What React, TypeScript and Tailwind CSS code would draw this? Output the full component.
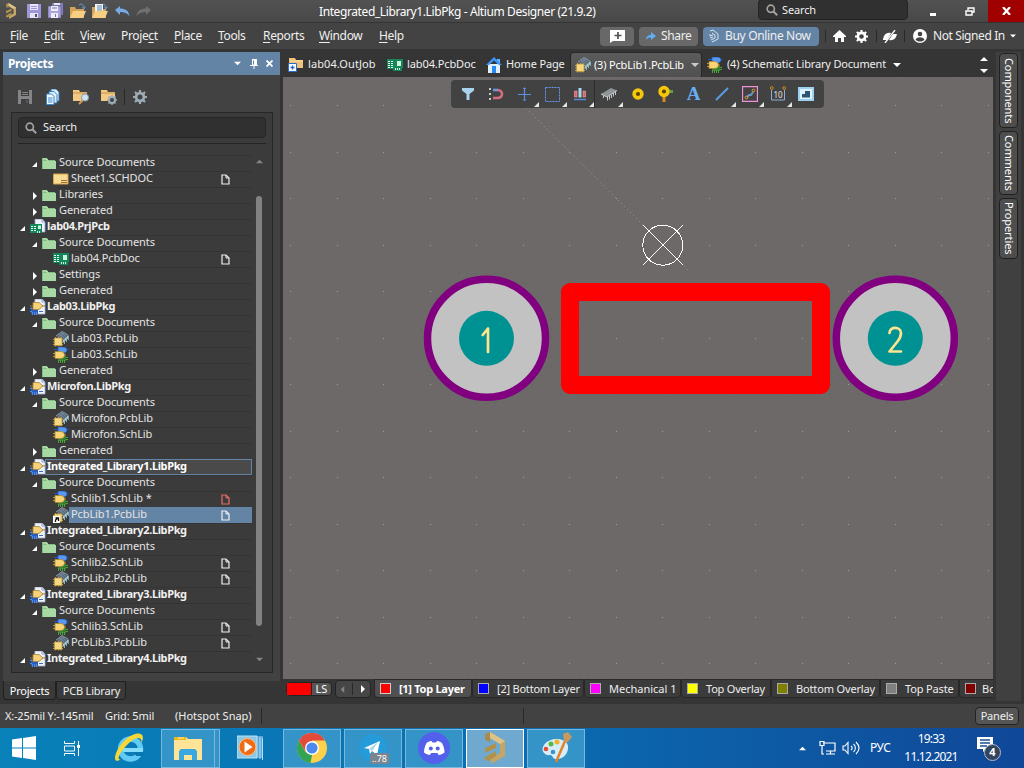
import React from "react";

type P = { className?: string };

const Svg = ({ w = 16, h = 16, className = "", children }: { w?: number; h?: number; className?: string; children: React.ReactNode }) => (
  <svg width={w} height={h} viewBox={`0 0 ${w} ${h}`} className={"shrink-0 " + className} fill="none">
    {children}
  </svg>
);

/* ---------- icons ---------- */
const AltiumLogo = ({ size = 16 }: { size?: number }) => (
  <svg width={size} height={size} viewBox="0 0 32 32" className="shrink-0">
    <path d="M6 2l5-2v10l-5-2z" fill="#a88a4c" />
    <path d="M11 0l15 9v15l-14 8v-6l9-5v-9L11 6z" fill="#c3a565" />
    <path d="M11 0l15 9-5 3-10-6z" fill="#dcc489" />
    <path d="M6 16l11-5v5L6 21zM6 25l11-6v5L9 29l-3-1z" fill="#b0924f" />
  </svg>
);
const Floppy = ({ c = "#9d96d8", hi = "#e6e4f5" }: { c?: string; hi?: string }) => (
  <Svg>
    <path d="M1 1h14v14H1z" fill={c} />
    <path d="M4 1h8v6H4z" fill={hi} />
    <path d="M5 3.500h6M5 5.500h6" stroke={c} />
    <path d="M4 10h8v5H4z" fill={hi} />
    <path d="M9 11h2v3H9z" fill="#555370" />
  </Svg>
);
const FloppyAll = () => (
  <Svg>
    <path d="M4 0h11v12H4z" fill="#8580bd" />
    <path d="M6 0h6v2H6z" fill="#e6e4f5" />
    <path d="M0 3h13v12H0z" fill="#a9a3de" stroke="#55527f" strokeWidth=".6" />
    <path d="M3 3h7v5H3zM3 10h7v5H3z" fill="#eeecf8" />
    <path d="M4 5h5M7.500 11v3" stroke="#77729f" />
  </Svg>
);
const OpenFolder = ({ doc = false }: { doc?: boolean }) => (
  <Svg>
    <path d="M9 2c3-2 5 0 5 3M12 4l2 2 1.500-2.500" stroke="#5a86a8" strokeWidth="1.200" />
    <path d="M0 4h5l1 2h8v9H0z" fill="#d3a35a" />
    {doc && <path d="M3 1h8v9H3z" fill="#f4f4f4" />}
    {doc && <path d="M5 3h5M5 5h5M5 7h5" stroke="#5b87b5" />}
    <path d="M3 8h13l-3 7H0z" fill="#f7cf82" />
  </Svg>
);
const Arrow = ({ flip = false }: { flip?: boolean }) => (
  <Svg w={15} h={12}>
    <g transform={flip ? "translate(15 0) scale(-1 1)" : undefined}>
      <path d="M0 5l5-4v2.500c5 0 9 2 9.500 8C12.500 8 9 7 5 7v3z" fill={flip ? "#707070" : "#77aae6"} />
    </g>
  </Svg>
);
const Magnifier = () => (
  <Svg w={12} h={12}>
    <circle cx="4.800" cy="4.800" r="3.600" stroke="#a2a2a2" strokeWidth="1.700" />
    <path d="M7.500 7.500l3.700 3.700" stroke="#a2a2a2" strokeWidth="2" />
  </Svg>
);
const Gear = ({ c = "#fff", size = 14 }: { c?: string; size?: number }) => (
  <svg width={size} height={size} viewBox="0 0 14 14" className="shrink-0">
    <circle cx="7" cy="7" r="3.900" fill="none" stroke={c} strokeWidth="2.800" />
    <g stroke={c} strokeWidth="2.200">
      <path d="M7 0v3M7 11v3M0 7h3M11 7h3M2 2l2 2M10 10l2 2M12 2l-2 2M4 10l-2 2" />
    </g>
  </svg>
);
const Copies = () => (
  <Svg>
    <path d="M6 0h5l3 3v9H6z" fill="#dbeefc" stroke="#2f77b5" strokeWidth=".9" />
    <path d="M4 2.500h5l3 3V14H4z" fill="#dbeefc" stroke="#2f77b5" strokeWidth=".9" />
    <path d="M1.500 5h5l2.500 2.500v8H1.500z" fill="#f0f8ff" stroke="#3d87c6" />
    <path d="M3 9h4.500M3 11h4.500M3 13h4.500" stroke="#3d87c6" />
  </Svg>
);
const FolderPlus = ({ kind }: { kind: "lens" | "gear" }) => (
  <Svg>
    <path d="M0 1h6l1 2h7v9H0z" fill="#f4c983" />
    <path d="M0 4h14" stroke="#c4924d" />
    {kind === "lens" ? (
      <>
        <path d="M9.500 11.500L6 15" stroke="#d8984a" strokeWidth="2" />
        <circle cx="12" cy="8.500" r="3.600" fill="#cfe0ee" stroke="#8198aa" />
      </>
    ) : (
      <>
        <circle cx="11" cy="11" r="3" fill="#424242" stroke="#9cadb8" strokeWidth="2" />
        <path d="M11 6v2M11 14v2M6 11h2M14 11h2M7.500 7.500L9 9M13 13l1.500 1.500M14.500 7.500L13 9M9 13l-1.500 1.500" stroke="#9cadb8" strokeWidth="1.300" />
      </>
    )}
  </Svg>
);
const Folder = () => (
  <Svg w={14} h={12}>
    <path d="M0 1h5l1 2h7v9H0z" fill="#7fbf80" />
    <path d="M1 4h13v8H1z" fill="#a6d9a3" />
    <path d="M1 2h4l1 2" stroke="#c7eac3" />
  </Svg>
);
const PcbDoc = () => (
  <Svg w={16} h={12}>
    <path d="M0 0h16v9h-1v3H6v-2H0z" fill="#15855a" />
    <path d="M1 2.500h2M1 4.500h2M1 6.500h2M1 8.500h2M4 2.500h2M4 4.500h2M4 6.500h2M4 8.500h2" stroke="#e2fff0" />
    <path d="M10 2h4v5h-4z" fill="#c9f5df" />
    <path d="M8.500 9v2M10.500 9v2M12.500 9v2" stroke="#c9f5df" />
  </Svg>
);
const PrjPcb = () => (
  <Svg>
    <path d="M5 0h7l3 3v10H5z" fill="#f0f1fa" stroke="#99a2cd" strokeWidth=".8" />
    <path d="M12 0v3h3" stroke="#99a2cd" />
    <path d="M0 5h12v9H0z" fill="#15855a" />
    <path d="M1 7.500h2M1 9.500h2M1 11.500h2M4 7.500h2M4 9.500h2M4 11.500h2" stroke="#e2fff0" />
    <path d="M8 6.500h3v3.500H8z" fill="#c9f5df" />
    <path d="M7.500 12v2M9.500 12v2" stroke="#c9f5df" />
  </Svg>
);
const LibPkg = () => (
  <Svg>
    <path d="M5 0h7l3 3v12H4z" fill="#eef0fa" stroke="#a6b0d0" strokeWidth=".8" />
    <path d="M12 0v3h3" stroke="#8fa0c0" />
    <path d="M1 8h7v7H1z" fill="#285dbe" />
    <path d="M0 9.500h2M0 12.500h2M2.500 13v3M4.500 13v3M6.500 13v3" stroke="#4f8ce8" />
    <path d="M0 7h15" stroke="#a17a25" />
    <path d="M3 3.500h6l4 3.500-4 3.500H3z" fill="#f5d279" stroke="#a8822e" strokeWidth=".8" />
    <path d="M9 12.500h4" stroke="#3e6fb8" />
  </Svg>
);
const PcbLib = ({ link = false }: { link?: boolean }) => (
  <Svg>
    <path d="M3 5l6-4.500L15 4l-5 5z" fill="#58697b" />
    <path d="M3 5l6-4.500L15 4" stroke="#93a6b6" strokeWidth=".8" />
    <path d="M6 3l5.500 4M8 2l5 3.500M5.500 6l6-4.500" stroke="#7f92a4" strokeWidth=".7" />
    <path d="M10 9l5.500-5v3L10 12z" fill="#a9cdd4" />
    <path d="M11.500 8v5M13.500 6v5M15.300 5v4" stroke="#8fb4bd" strokeWidth="1" />
    <path d="M0 8.500h10M0 11h10M0 13.500h10M2.500 6v9.500M5.500 6v9.500M8 6v9.500" stroke="#c2a24d" strokeWidth=".9" />
    <path d="M1.500 7h7.500v7.500H1.500z" fill="#f4d780" stroke="#b8963f" strokeWidth=".7" />
    {link && (
      <>
        <path d="M0 9h7v7H0z" fill="#fff" />
        <path d="M2.500 15v-2l2-1.500M2.500 11h3v3" stroke="#111" strokeWidth="1.300" />
      </>
    )}
  </Svg>
);
const SchLib = () => (
  <Svg>
    <path d="M1 2.500h14" stroke="#205bbb" />
    <path d="M5 0h5c3 0 4 1.500 4 3s-1 3-4 3H5z" fill="#5a98ef" stroke="#205bbb" strokeWidth=".8" />
    <path d="M5 9h8v5H5z" fill="#328232" />
    <path d="M5.500 13v3M7.500 13v3M9.500 13v3M11.500 13v3M13 10.500h2M13 12.500h2" stroke="#4fae3d" strokeWidth=".9" />
    <path d="M0 6.500h3M0 9.500h3M8 8h5" stroke="#c0962e" />
    <path d="M2 4.500h5.500c2.500 0 4 1.500 4 3.500s-1.500 3.500-4 3.500H2z" fill="#f7d476" stroke="#ad852e" strokeWidth=".8" />
  </Svg>
);
const SchDoc = () => (
  <Svg w={16} h={12}>
    <path d="M.5 1h14.500v10H.5z" fill="#f8dc95" stroke="#d3a04b" />
    <path d="M8 7.500h6M8 9.500h6" stroke="#9c7131" />
  </Svg>
);
const OutJob = () => (
  <Svg>
    <path d="M1 1h6l1 2h7v8H1z" fill="#efc27c" />
    <path d="M2 4h13" stroke="#fae1ab" />
    <path d="M.5 6.500h8v8h-8z" fill="#fff" stroke="#2d6cc9" />
    <path d="M2.500 10.500h4M4.500 8.500v4" stroke="#1c68d4" strokeWidth="1.300" />
  </Svg>
);
const HomeIcon = () => (
  <Svg>
    <path d="M11 2h3v5h-3z" fill="#6cb2ff" />
    <path d="M2 7h12v9H2z" fill="#e1effc" />
    <path d="M0 8l8-8 8 8H13L8 3.500 3 8z" fill="#3a94fb" />
    <path d="M6 9h4v7H6z" fill="#268af5" />
  </Svg>
);
const DocIcon = ({ red = false }: { red?: boolean }) => (
  <Svg w={9} h={11}>
    <path d="M1 1h4l3 3v6H1z" stroke={red ? "#ee6b6b" : "#f0f0f0"} strokeWidth="1.200" />
    <path d="M5 1v3h3" stroke={red ? "#ee6b6b" : "#f0f0f0"} />
  </Svg>
);
const Tri = ({ dir, c = "#fff", s = 8 }: { dir: "up" | "down" | "left" | "right"; c?: string; s?: number }) => (
  <svg width={s} height={s} viewBox="0 0 8 8" className="shrink-0">
    <path d={{ up: "M0 6l4-4 4 4z", down: "M0 2l4 4 4-4z", left: "M6 0L2 4l4 4z", right: "M2 0l4 4-4 4z" }[dir]} fill={c} />
  </svg>
);

/* ---------- title and menu ---------- */
const TitleBar = () => (
  <div className="flex h-[23px] shrink-0 border-b border-[#343434] bg-linear-to-b from-[#525252] to-[#484848]">
    <div className="flex w-[319px] items-center pl-[3px]">
      <div className="flex w-[23px] items-center"><AltiumLogo /></div>
      <div className="w-[22px]"><Floppy /></div>
      <div className="w-[22px]"><FloppyAll /></div>
      <div className="w-[22px]"><OpenFolder /></div>
      <div className="w-[23px]"><OpenFolder doc /></div>
      <div className="w-[21px]"><Arrow /></div>
      <Arrow flip />
    </div>
    <div className="w-[439px] text-[12px] leading-[23px] tracking-[-0.4px] text-white">Integrated_Library1.LibPkg - Altium Designer (21.9.2)</div>
    <div className="-mt-px flex h-[21px] w-[150px] items-center gap-[4px] rounded border border-[#242424] bg-[#303030] pl-[7px] text-[11px]">
      <Magnifier />
      <span className="leading-[17px] tracking-[-0.15px]">Search</span>
    </div>
    <div className="flex w-[80px] items-center pl-[22px]">
      <div className="mt-1.5 h-[3px] w-[6px] bg-white" />
      <Svg w={10} h={9} className="ml-[29px]">
        <path d="M3 3V1h6v4H7M1 4h6v4H1z" stroke="#fff" strokeWidth="1.400" />
      </Svg>
    </div>
    <div className="flex w-9 items-center justify-center bg-[#a00000]">
      <Svg w={9} h={8}><path d="M1 0l7 8M8 0L1 8" stroke="#fff" strokeWidth="2.200" /></Svg>
    </div>
  </div>
);

const menus: [string, string, string, string][] = [
  ["", "F", "ile", "w-[34px]"],
  ["", "E", "dit", "w-[36px]"],
  ["", "V", "iew", "w-[41px]"],
  ["Proje", "c", "t", "w-[53px]"],
  ["", "P", "lace", "w-[44px]"],
  ["", "T", "ools", "w-[45px]"],
  ["", "R", "eports", "w-[56px]"],
  ["", "W", "indow", "w-[60px]"],
  ["", "H", "elp", "w-[60px]"],
];
const Divider = ({ className = "" }: P) => <div className={"w-px bg-[#282828] " + className} />;

const MenuBar = () => (
  <div className="flex h-[26px] shrink-0 items-center bg-[#434343] pl-[10px] text-[12px] tracking-[-0.35px]">
    {menus.map(([a, u, b, w]) => (
      <div key={u + b} className={w}>
        {a}<span className="underline underline-offset-2">{u}</span>{b}
      </div>
    ))}
    <div className="ml-[161px] flex h-[19px] w-[34px] items-center justify-center rounded-sm bg-[#686868]">
      <Svg w={16} h={14}>
        <path d="M1 1h15v11H4l-3 2z" fill="#fff" />
        <path d="M9 3v7M5.500 6.500h7" stroke="#505050" strokeWidth="1.700" />
      </Svg>
    </div>
    <div className="ml-[5px] flex h-[19px] w-[59px] items-center gap-[5px] rounded-sm bg-[#686868] pl-[7px]">
      <Svg w={10} h={9}><path d="M0 8c0-4 3-5 5-5V0l5 4-5 4V5.500C3 5.500 1 6 0 8z" fill="#62aef5" /></Svg>Share
    </div>
    <div className="ml-[5px] flex h-[19px] w-[116px] items-center gap-[6px] rounded-sm bg-[#6484a5] pl-[6px]">
      <Svg w={10} h={14}>
        <path d="M1 2l3-1 5 4v5l-6 3M3 4l3 2v3l-4 2M1 5v2l3-1M1 9l3-1" stroke="#d8e4f2" />
      </Svg>
      <span className="tracking-[-0.33px]">Buy Online Now</span>
    </div>
    <Divider className="ml-[6px] h-3" />
    <Svg w={13} h={12} className="ml-[7px]"><path d="M0 6l6.500-6L13 6v1h-2v5H8V8H5v4H2V7H0z" fill="#fff" /></Svg>
    <div className="ml-[9px]"><Gear size={13} /></div>
    <Divider className="ml-[8px] h-3" />
    <Svg w={14} h={13} className="ml-[6px]">
      <path d="M0 9c1-5 4-7 8-6L4 10H0zM14 4c-1 5-4 7-8 6l4-6z" fill="#fff" />
      <path d="M12 0L2 13" stroke="#fff" strokeWidth="1.300" />
    </Svg>
    <Divider className="ml-[7px] h-3" />
    <Svg w={14} h={14} className="ml-[8px]">
      <circle cx="7" cy="7" r="7" fill="#fff" />
      <circle cx="7" cy="5" r="2.300" fill="#434343" />
      <path d="M2.500 10.500c2-3 7-3 9 0-2 2.700-7 2.700-9 0z" fill="#434343" />
    </Svg>
    <span className="ml-[6px] w-[77px] tracking-[-0.4px] whitespace-nowrap">Not Signed In</span>
    <Tri dir="down" s={6} />
  </div>
);

/* ---------- project tree ---------- */
type Row = { k: "src" | "fold" | "prj" | "lib" | "schdoc" | "pcbdoc" | "pcb" | "sch"; t: string; d?: "w" | "r"; sel?: boolean; focus?: boolean };
const rows: Row[] = [
  { k: "src", t: "Source Documents" },
  { k: "schdoc", t: "Sheet1.SCHDOC", d: "w" },
  { k: "fold", t: "Libraries" },
  { k: "fold", t: "Generated" },
  { k: "prj", t: "lab04.PrjPcb" },
  { k: "src", t: "Source Documents" },
  { k: "pcbdoc", t: "lab04.PcbDoc", d: "w" },
  { k: "fold", t: "Settings" },
  { k: "fold", t: "Generated" },
  { k: "lib", t: "Lab03.LibPkg" },
  { k: "src", t: "Source Documents" },
  { k: "pcb", t: "Lab03.PcbLib" },
  { k: "sch", t: "Lab03.SchLib" },
  { k: "fold", t: "Generated" },
  { k: "lib", t: "Microfon.LibPkg" },
  { k: "src", t: "Source Documents" },
  { k: "pcb", t: "Microfon.PcbLib" },
  { k: "sch", t: "Microfon.SchLib" },
  { k: "fold", t: "Generated" },
  { k: "lib", t: "Integrated_Library1.LibPkg", focus: true },
  { k: "src", t: "Source Documents" },
  { k: "sch", t: "Schlib1.SchLib *", d: "r" },
  { k: "pcb", t: "PcbLib1.PcbLib", d: "w", sel: true },
  { k: "lib", t: "Integrated_Library2.LibPkg" },
  { k: "src", t: "Source Documents" },
  { k: "sch", t: "Schlib2.SchLib", d: "w" },
  { k: "pcb", t: "PcbLib2.PcbLib", d: "w" },
  { k: "lib", t: "Integrated_Library3.LibPkg" },
  { k: "src", t: "Source Documents" },
  { k: "sch", t: "Schlib3.SchLib", d: "w" },
  { k: "pcb", t: "PcbLib3.PcbLib", d: "w" },
  { k: "lib", t: "Integrated_Library4.LibPkg" },
];

const Open = () => <Svg w={5} h={5}><path d="M5 0v5H0z" fill="#fff" /></Svg>;
const Closed = () => <Svg w={4} h={8}><path d="M0 0l4 4-4 4z" fill="#fff" /></Svg>;

const TreeRow = ({ r }: { r: Row }) => {
  const top = r.k === "prj" || r.k === "lib";
  const mid = r.k === "src" || r.k === "fold";
  const icon = {
    src: <Folder />, fold: <Folder />, prj: <PrjPcb />, lib: <LibPkg />, schdoc: <SchDoc />, pcbdoc: <PcbDoc />,
    pcb: <PcbLib link={r.sel} />, sch: <SchLib />,
  }[r.k];
  return (
    <div className={"flex h-4 w-[240px] " + (top ? "pl-2" : mid ? "pl-5" : "pl-[41px]")}>
      {(top || mid) && (
        <div className={"flex w-[10px] items-center pt-[2px] " + (r.k === "fold" ? "pl-px" : "")}>{r.k === "fold" ? <Closed /> : <Open />}</div>
      )}
      <div className={"-mt-px flex shrink-0 items-center " + (mid ? "w-[15px]" : "w-[16px]")}>{icon}</div>
      <div
        className={
          "flex flex-1 items-center justify-between whitespace-nowrap leading-[14px] " +
          (top ? "pl-px font-bold tracking-[-0.36px] text-[#f0f0f0] " : "pl-[2px] tracking-[-0.1px] text-[#e4e4e4] ") +
          (r.sel ? "bg-[#6484a5] pt-px" : r.focus ? "-ml-px border border-[#6484a5] bg-[#4a4a4a] text-white" : "border-t border-[#343434]")
        }
      >
        <span className={r.focus ? "-mt-[3px]" : "-mt-[4px]"}>{r.t}</span>
        {r.d && <span className="mr-[22px] -mt-px"><DocIcon red={r.d === "r"} /></span>}
      </div>
    </div>
  );
};

const ProjectsPanel = () => (
  <div className="flex w-[283px] shrink-0 flex-col pl-[3px]">
    <div className="flex h-[629px] w-[277px] shrink-0 flex-col bg-[#424242]">
      <div className="flex h-[23px] shrink-0 items-center bg-[#6484a5] pl-[5px] text-[12px] font-bold tracking-[-0.4px] text-white">
        <span className="w-[226px]">Projects</span>
        <Tri dir="down" s={7} />
        <Svg w={8} h={10} className="ml-[9px]"><path d="M2 0h5v6h1v1H0V6h2zM3.500 7h1v3h-1z" fill="#fff" /><path d="M3.500 1.500v4" stroke="#6484a5" /></Svg>
        <Svg w={7} h={7} className="ml-[8px]"><path d="M.5.5l6 6M6.500.5l-6 6" stroke="#fff" strokeWidth="1.800" /></Svg>
      </div>
      <div className="flex h-[37px] shrink-0 items-center pt-[7px] pl-[14px]">
        <div className="w-[28px]"><Floppy c="#858585" hi="#3f3f3f" /></div>
        <div className="w-[28px]"><Copies /></div>
        <div className="w-[28px]"><FolderPlus kind="lens" /></div>
        <div className="w-[23px]"><FolderPlus kind="gear" /></div>
        <Divider className="mr-[8px] h-4" />
        <Gear c="#9dabb5" />
      </div>
      <div className="ml-2 flex h-[561px] w-[262px] flex-col border border-[#262626] bg-[#3b3b3b]">
        <div className="mx-[6px] mt-1 flex h-[21px] w-[248px] shrink-0 items-center gap-[6px] rounded border border-[#252525] bg-[#303030] pl-[6px]">
          <Magnifier />
          <span className="-mt-px leading-4 tracking-[-0.15px]">Search</span>
        </div>
        <div className="mx-[6px] mt-[5px] h-px shrink-0 bg-[#242424]" />
        <div className="mt-[11px] flex">
          <div>{rows.map((r, i) => <TreeRow key={i} r={r} />)}</div>
          <div className="ml-[3px] flex h-[508px] w-2 flex-col items-center justify-between pt-[3px]">
            <Tri dir="up" c="#858585" s={7} />
            <div className="mt-[31px] mb-[30px] w-[6px] flex-1 rounded-full bg-[#828282]" />
            <Tri dir="down" c="#858585" s={7} />
          </div>
        </div>
      </div>
    </div>
    <div className="flex h-[19px] tracking-[-0.2px]">
      <div className="flex w-[53px] items-center justify-center rounded-b border border-t-0 border-[#202020] bg-[#3a3a3a] pt-[2px] text-white">Projects</div>
      <div className="flex w-[70px] items-center justify-center rounded-b border border-[#202020] bg-[#3a3a3a] pt-[2px] pl-px">PCB Library</div>
    </div>
  </div>
);

/* ---------- editor ---------- */
const DocTabs = () => (
  <div className="flex h-[25px] shrink-0 items-center whitespace-nowrap">
    <div className="flex w-[99px] items-center gap-[4px] pl-[5px] tracking-[0.1px]"><OutJob />lab04.OutJob</div>
    <div className="flex w-[103px] items-center gap-[4px] pl-[5px] tracking-[-0.1px]"><PcbDoc />lab04.PcbDoc</div>
    <div className="flex w-[85px] items-center gap-[4px] pl-px tracking-[-0.15px]"><HomeIcon />Home Page</div>
    <div className="flex h-full w-[132px] items-center gap-[3px] rounded-t border border-b-0 border-[#272727] bg-linear-to-b from-[#5b5b5b] to-[#505050] pl-[4px] text-white">
      <PcbLib /><span className="w-[94px] tracking-[-0.18px]">(3) PcbLib1.PcbLib</span><Tri dir="down" c="#ccc" />
    </div>
    <div className="flex w-[278px] items-center gap-[4px] pl-[5px]">
      <SchLib /><span className="w-[162px] tracking-[-0.18px]">(4) Schematic Library Document</span><Tri dir="down" />
    </div>
    <div className="flex flex-col gap-[4px]"><Tri dir="up" /><Tri dir="down" /></div>
  </div>
);

const Via = ({ tail = false }: { tail?: boolean }) => (
  <Svg w={18} h={18}>
    {tail && <path d="M8 8v9" stroke="#d98a25" strokeWidth="3" />}
    {tail && <path d="M10 6.500h7" stroke="#5ea044" strokeWidth="3" />}
    <circle cx={tail ? 8 : 10} cy={tail ? 6.500 : 9} r="3.900" fill="#5c4200" stroke="#f5c60c" strokeWidth="3.600" />
  </Svg>
);
const tools: { n: string; more?: boolean; icon: React.ReactNode }[] = [
  { n: "filter", icon: <Svg w={14} h={14}><path d="M1 1h12v2.500L8.500 7v6h-3V7L1 3.500z" fill="#a9d2ee" /></Svg> },
  { n: "snap", icon: <Svg><path d="M1 3h2M1 8h2M1 13h2" stroke="#c4cace" strokeWidth="2" /><path d="M5 4h5" stroke="#6d94dd" strokeWidth="2.600" /><path d="M9.500 4c6 0 6 8 0 8H5" stroke="#d56f80" strokeWidth="2.600" /></Svg> },
  { n: "move", more: true, icon: <Svg w={14} h={14}><path d="M7.500 1v13M1 7.500h13" stroke="#5f8fe6" strokeWidth="1.200" /><path d="M6 2l1.500-1.500L9 2M6 12.500L7.500 14 9 12.500" stroke="#5685d9" /></Svg> },
  { n: "select", more: true, icon: <Svg w={15} h={15}><path d="M.5.5h14v14H.5z" stroke="#699af0" strokeDasharray="2 1" /></Svg> },
  { n: "align", more: true, icon: <Svg w={14} h={14}><path d="M1.500 4h2.500v6H1.500zM10 4h2.500v6H10z" fill="#d7676b" stroke="#f3a1a1" strokeWidth=".6" /><path d="M5.500 1h3v9.500h-3z" fill="#a9d8ef" /><path d="M1 12.500h12" stroke="#5a8dd7" strokeWidth="1.500" /></Svg> },
  { n: "component", more: true, icon: <Svg><path d="M0 8l10-6 6 2.500L6 11z" fill="#8f9497" /><path d="M0 8l6 3L16 4.500" stroke="#c7cccf" /><path d="M6.500 11v3.500M8.500 10v3.500M10.500 8.500V12M12.500 7v3.500M14.500 6v3M2.500 9.500V12" stroke="#c2c7ca" /></Svg> },
  { n: "pad", icon: <Via /> },
  { n: "via", icon: <Via tail /> },
  { n: "text", icon: <span className="font-[Liberation_Serif] text-[19px] font-bold text-[#68aef3]">A</span> },
  { n: "line", more: true, icon: <Svg w={14} h={14}><path d="M1 13L13 1" stroke="#579ce4" strokeWidth="2" /></Svg> },
  { n: "track", more: true, icon: <Svg><path d="M.5.5h15v15H.5z" stroke="#ed91da" strokeWidth="1.300" /><path d="M5 11l2-2h2l2-3" stroke="#6795c5" strokeWidth="2" /><circle cx="4.500" cy="11.500" r="1.400" stroke="#dca135" /><circle cx="11.500" cy="4.500" r="1.400" stroke="#dca135" /></Svg> },
  { n: "dimension", more: true, icon: <Svg><path d="M1.500 4v10h13V4" stroke="#8eafd0" /><circle cx="1.800" cy="2" r="1.400" stroke="#cc8b29" /><circle cx="14.200" cy="2" r="1.400" stroke="#cc8b29" /><text x="8" y="11.500" textAnchor="middle" fontSize="8" fontFamily="Noto Sans" fill="#e1e1e1">10</text></Svg> },
  { n: "region", icon: <Svg><path d="M0 1h16v14H0z" fill="#9ed0ef" /><path d="M2 3h12v10H2z" fill="#ddf2ff" /><path d="M7 5h5v6.500H4V8h3z" fill="#30536f" /></Svg> },
];
const ActiveBar = () => (
  <div className="mt-[3px] ml-[168px] flex h-[28px] w-[373px] items-center rounded bg-[#424242] pl-[3px]">
    {tools.map((t) => (
      <div key={t.n} className={"relative flex h-full w-[28.200px] items-center justify-center " + (t.n === "align" ? "border-r border-[#2d2d2d]" : "")}>
        {t.icon}
        {t.more && <Svg w={5} h={5} className="absolute right-0 bottom-[1px]"><path d="M5 0v5H0z" fill="#e5e5e5" /></Svg>}
      </div>
    ))}
  </div>
);

/* One 1px dot per grid node, snapped to whole pixels. */
const gridPath = (step: number) => {
  let d = "";
  for (let i = Math.ceil(-147.300 / step); 430.300 + i * step < 992; i++)
    for (let j = Math.ceil(-168.300 / step); 245.300 + j * step < 678; j++)
      d += `M${Math.floor(430.300 + i * step)} ${Math.floor(245.300 + j * step)}h1v1h-1z`;
  return d;
};
const minorDots = gridPath(9.300);
const majorDots = gridPath(46.500);

const BoardDrawing = () => (
  <svg className="absolute inset-0" width="710" height="602" viewBox="283 77 710 602">
    <path d={minorDots} fill="#615d5c" />
    <path d={majorDots} fill="#a19e9c" />
    <path d="M526 108L643 225M684 266l6 6" stroke="#96928f" strokeWidth=".8" strokeDasharray="1.400 2.800" />
    <rect x="570" y="292" width="251" height="93" fill="none" stroke="#f00" strokeWidth="18" strokeLinejoin="round" />
    {[486.500, 895.300].map((x) => (
      <g key={x}>
        <circle cx={x} cy="338.300" r="59" fill="#c2c2c2" stroke="#800080" strokeWidth="7.500" />
        <circle cx={x} cy="338.300" r="27.500" fill="#009292" />
      </g>
    ))}
    <g stroke="#ffe38f" strokeWidth="2.700" fill="none" strokeLinejoin="round" strokeLinecap="round">
      <path d="M482.700 335l5.300-6.500V352" />
      <path d="M889.500 333c0-7 11.500-6.500 11.500 0 0 4-1.500 6-3.500 8.500L889.500 351.500H901" />
    </g>
    <g stroke="#fff" fill="none" shapeRendering="crispEdges">
      <circle cx="662.800" cy="245.200" r="20" />
      <path d="M643 225l40 40M683 225l-40 40" />
    </g>
  </svg>
);

const layers: [string, string, string][] = [
  ["[2] Bottom Layer", "bg-[#0000ff]", "w-[112px] tracking-[-0.22px]"],
  ["Mechanical 1", "bg-[#ff00ff]", "w-[97px] tracking-[0px]"],
  ["Top Overlay", "bg-[#ffff00]", "w-[90px] tracking-[-0.2px]"],
  ["Bottom Overlay", "bg-[#808000]", "w-[109px] tracking-[-0.15px]"],
  ["Top Paste", "bg-[#808080]", "w-[79px] tracking-[-0.15px]"],
];
const LayerBar = () => (
  <div className="flex h-[20px] w-[710px] shrink-0 overflow-hidden whitespace-nowrap">
    <div className="mt-[3px] ml-[3px] flex h-[14px] w-[46px] shrink-0 rounded border border-[#242424] bg-[#565656]">
      <div className="w-[25px] border-r border-[#242424] bg-[#ff0000]" />
      <div className="flex flex-1 items-center justify-center text-white">LS</div>
    </div>
    <div className="mt-[1px] ml-[3px] flex h-[18px] w-[36px] shrink-0 items-center justify-around rounded border border-[#242424] bg-[#464646]">
      <Tri dir="left" c="#858585" s={7} /><Divider className="h-3" /><Tri dir="right" s={8} />
    </div>
    <div className="ml-[3px] flex h-[19px] w-[98px] shrink-0 items-center rounded-b border border-[#282828] bg-[#505050] pl-[5px] text-white">
      <div className="mr-[8px] size-[11px] border border-[#ccc] bg-[#ff0000]" /><span className="pt-[2px] font-bold tracking-[-0.28px]">[1] Top Layer</span>
    </div>
    {layers.map(([n, c, w]) => (
      <div key={n} className={"flex h-[19px] shrink-0 items-center rounded-b border border-[#282828] bg-[#3b3b3b] pl-[5px] " + w}>
        <div className={"mr-[8px] size-[11px] shrink-0 border border-[#aaa] " + c} /><span className="pt-[2px]">{n}</span>
      </div>
    ))}
    <div className="flex h-[19px] flex-1 items-center overflow-hidden rounded-bl border border-r-0 border-[#282828] bg-[#3b3b3b] pl-[5px]">
      <div className="mr-[6px] size-[11px] shrink-0 border border-[#aaa] bg-[#800000]" /><span className="pt-[2px]">Bo</span>
    </div>
  </div>
);

const SideTabs = () => (
  <div className="ml-[3px] flex h-[649px] w-[25px] shrink-0 flex-col items-center gap-[3px] bg-[#404040] pt-px">
    {[["Components", "h-[75px]"], ["Comments", "h-[64px]"], ["Properties", "h-[61px]"]].map(([n, h]) => (
      <div key={n} className={"flex w-[19px] items-center justify-center rounded border border-[#202020] bg-[#4e4e4e] leading-4 tracking-[-0.1px] text-white [writing-mode:vertical-rl] " + h}>{n}</div>
    ))}
  </div>
);

/* ---------- taskbar ---------- */
const TaskBtn = ({ active = false, className = "", children }: { active?: boolean; className?: string; children: React.ReactNode }) => (
  <div className={"relative mr-[3px] flex h-[39px] w-[58px] shrink-0 items-center justify-center border " + (active ? "border-white bg-[#70a9cf] " : "border-[#79b8db] bg-[#3594c7] ") + className}>{children}</div>
);

const Taskbar = () => (
  <div className="flex h-[40px] shrink-0 items-center bg-linear-to-r from-[#0981b9] via-[#0a6eb2] to-[#104798] text-white">
    <Svg w={24} h={24} className="ml-[12px]"><path d="M0 3.500L10 2v9.500H0zM11 2l13-2v11.500H11zM0 12.500h10V22L0 20.500zM11 12.500h13V24L11 22z" fill="#fff" /></Svg>
    <Svg w={17} h={15} className="ml-[28px]">
      <path d="M.5 0v2.500h10V0M.5 15v-2.500h10V15M.5 5h10v5H.5zM14.500 0v15" stroke="#fff" />
      <path d="M13 4h3v3h-3z" fill="#fff" />
    </Svg>
    <Svg w={32} h={32} className="ml-[33px]">
      <circle cx="16.500" cy="17" r="10" stroke="#61caf5" strokeWidth="5.500" />
      <path d="M9 18h20" stroke="#85dcfb" strokeWidth="4" />
      <path d="M20 20h11v4h-9z" fill="#0977b2" />
      <path d="M7 27C-2 34-1 20 11 8 21-1 33-1 27.500 11c.5-8-7-5.500-14 1.500C5 21 2 29 7 27z" fill="#f6d738" />
    </Svg>
    <div className="ml-[15px] flex h-[39px] w-[59px] border border-[#79b8db] bg-[#3594c7]">
      <div className="flex w-[53px] items-center justify-center border-r border-[#79b8db]">
        <Svg w={28} h={25}>
          <path d="M0 1h12l2 2h14v21H0z" fill="#ffe497" /><path d="M0 1h12v3H0z" fill="#efb719" /><path d="M4 2h6" stroke="#fff3bd" />
          <path d="M5 24V15l2-2h14l2 2v9h-5v-5h-8v5z" fill="#38a8e0" />
        </Svg>
      </div>
    </div>
    <Svg w={27} h={26} className="mx-[17px]">
      <path d="M5 1h21v22H5z" fill="#5ba7da" /><path d="M23 2v22M25.500 3v22" stroke="#b5dff5" />
      <path d="M0 1h20v22H0z" fill="#8dc7e8" stroke="#bee2f4" />
      <circle cx="10.500" cy="12" r="8.500" fill="#ef6c17" stroke="#ffc08a" /><path d="M7.500 6.500l8 5.500-8 5.500z" fill="#fff" />
    </Svg>
    <TaskBtn className="ml-[2px]">
      <svg width="30" height="30" viewBox="0 0 30 30">
        <circle cx="15" cy="15" r="15" fill="#fbd04b" />
        <path d="M8.500 19L15 22l-1.500 8A15 15 0 0 1 2 7.500z" fill="#32a453" />
        <path d="M2 7.500L8.500 18.500 15 7.500h13a15 15 0 0 0-26 0z" fill="#e44a3c" />
        <circle cx="15" cy="15" r="7" fill="#fff" /><circle cx="15" cy="15" r="5.600" fill="#4d88ef" />
      </svg>
    </TaskBtn>
    <TaskBtn>
      <Svg w={28} h={28}><circle cx="14" cy="14" r="14" fill="#259bda" /><path d="M5 14l16-7-3 14-5-4-2 3-1-5z" fill="#fff" /><path d="M10 15l9-7-6 9" fill="#a9d6ed" /></Svg>
      <div className="absolute right-[12px] bottom-[3px] rounded-xs bg-[#7b858d] px-[2px] text-[9px] leading-[11px]">..78</div>
    </TaskBtn>
    <TaskBtn>
      <Svg w={32} h={32}>
        <circle cx="16" cy="16" r="16" fill="#5360ec" />
        <path d="M8.500 11c2-1.500 4-2 5-2l1 1.500h3.500L19 9c1 0 3 .5 5 2 2 4 2.500 7 2.500 9.500-2 1.500-4 2.500-6 2.500l-1-2h-6.500l-1 2c-2 0-4-1-6-2.500 0-2.500.5-5.500 2.500-9.500z" fill="#fff" />
        <circle cx="12.800" cy="16.500" r="2" fill="#5360ec" /><circle cx="19.700" cy="16.500" r="2" fill="#5360ec" />
      </Svg>
    </TaskBtn>
    <TaskBtn active><AltiumLogo size={32} /></TaskBtn>
    <TaskBtn>
      <Svg w={32} h={32}>
        <path d="M4 13c6-8 22-8 24 1 1 9-7 14-13 13-3-1-2-4-5-4-5 1-10-4-6-10z" fill="#d7edf7" />
        <circle cx="13" cy="20" r="2.300" fill="#3c93c7" /><circle cx="6" cy="17" r="2.300" fill="#e34c37" /><circle cx="11" cy="12" r="2.500" fill="#56b947" /><circle cx="17" cy="10" r="2.500" fill="#efb329" />
        <path d="M25 9L16 30" stroke="#e38227" strokeWidth="2.500" /><path d="M24 9l-1-7 5-2 4 5-5 6z" fill="#c9985f" />
      </Svg>
    </TaskBtn>
    <div className="ml-[211px]"><Tri dir="up" s={7} /></div>
    <Svg w={17} h={14} className="ml-[13px]">
      <path d="M4 2h12v8H7M11.500 10v3M7 13h9M1 .5h4v4H1zM3 4.500V13h2" stroke="#fff" strokeWidth="1.200" />
    </Svg>
    <Svg w={18} h={14} className="ml-[6px]">
      <path d="M1 5h2l3-3.500v11L3 9H1zM9 5c1.500 1 1.500 3 0 4M11.500 3c2.500 2 2.500 6 0 8M14 1c4 4 4 8 0 12" stroke="#fff" strokeWidth="1.100" />
    </Svg>
    <div className="ml-[10px] w-[34px] text-[12px] tracking-[-0.4px]">РУС</div>
    <div className="w-[54px] text-center text-[12px] leading-[18px] tracking-[-0.8px] whitespace-nowrap">19:33<br />11.12.2021</div>
    <div className="relative ml-[19px]">
      <Svg w={24} h={26}><path d="M0 2h16v12H9l-3 3v-3H0z" fill="#fff" /><path d="M3 5h10M3 8h10M3 11h7" stroke="#185095" strokeWidth="1.300" /></Svg>
      <div className="absolute top-[9px] left-[7px] flex size-[17px] items-center justify-center rounded-full border border-[#b5bbc4] bg-[#33445e] text-[11px] font-bold">4</div>
    </div>
  </div>
);

export default function App() {
  return (
    <div className="flex h-[768px] w-[1024px] flex-col overflow-hidden bg-[#353535] text-[11px] text-[#efefef] [font-family:'Noto_Sans',sans-serif]">
      <TitleBar />
      <MenuBar />
      <div className="mt-[3px] flex h-[652px] shrink-0">
        <ProjectsPanel />
        <div className="flex w-[710px] shrink-0 flex-col">
          <DocTabs />
          <div className="relative h-[602px] shrink-0 bg-[#6d6968]">
            <BoardDrawing />
            <div className="relative flex"><ActiveBar /></div>
          </div>
          <LayerBar />
        </div>
        <SideTabs />
      </div>
      <div className="flex h-[24px] shrink-0 items-center bg-[#424242] pl-[5px]">
        <span className="w-[100px] tracking-[-0.2px]">X:-25mil Y:-145mil</span>
        <span className="w-[70px] tracking-[-0.1px]">Grid: 5mil</span>
        <span className="w-[86px]">(Hotspot Snap)</span>
        <Divider className="h-4" />
        <Divider className="ml-[261px] h-4" />
        <div className="ml-[451px] flex h-[18px] w-[44px] items-center justify-center rounded border border-[#232323] bg-[#555] pt-px tracking-[-0.2px]">Panels</div>
      </div>
      <Taskbar />
    </div>
  );
}
